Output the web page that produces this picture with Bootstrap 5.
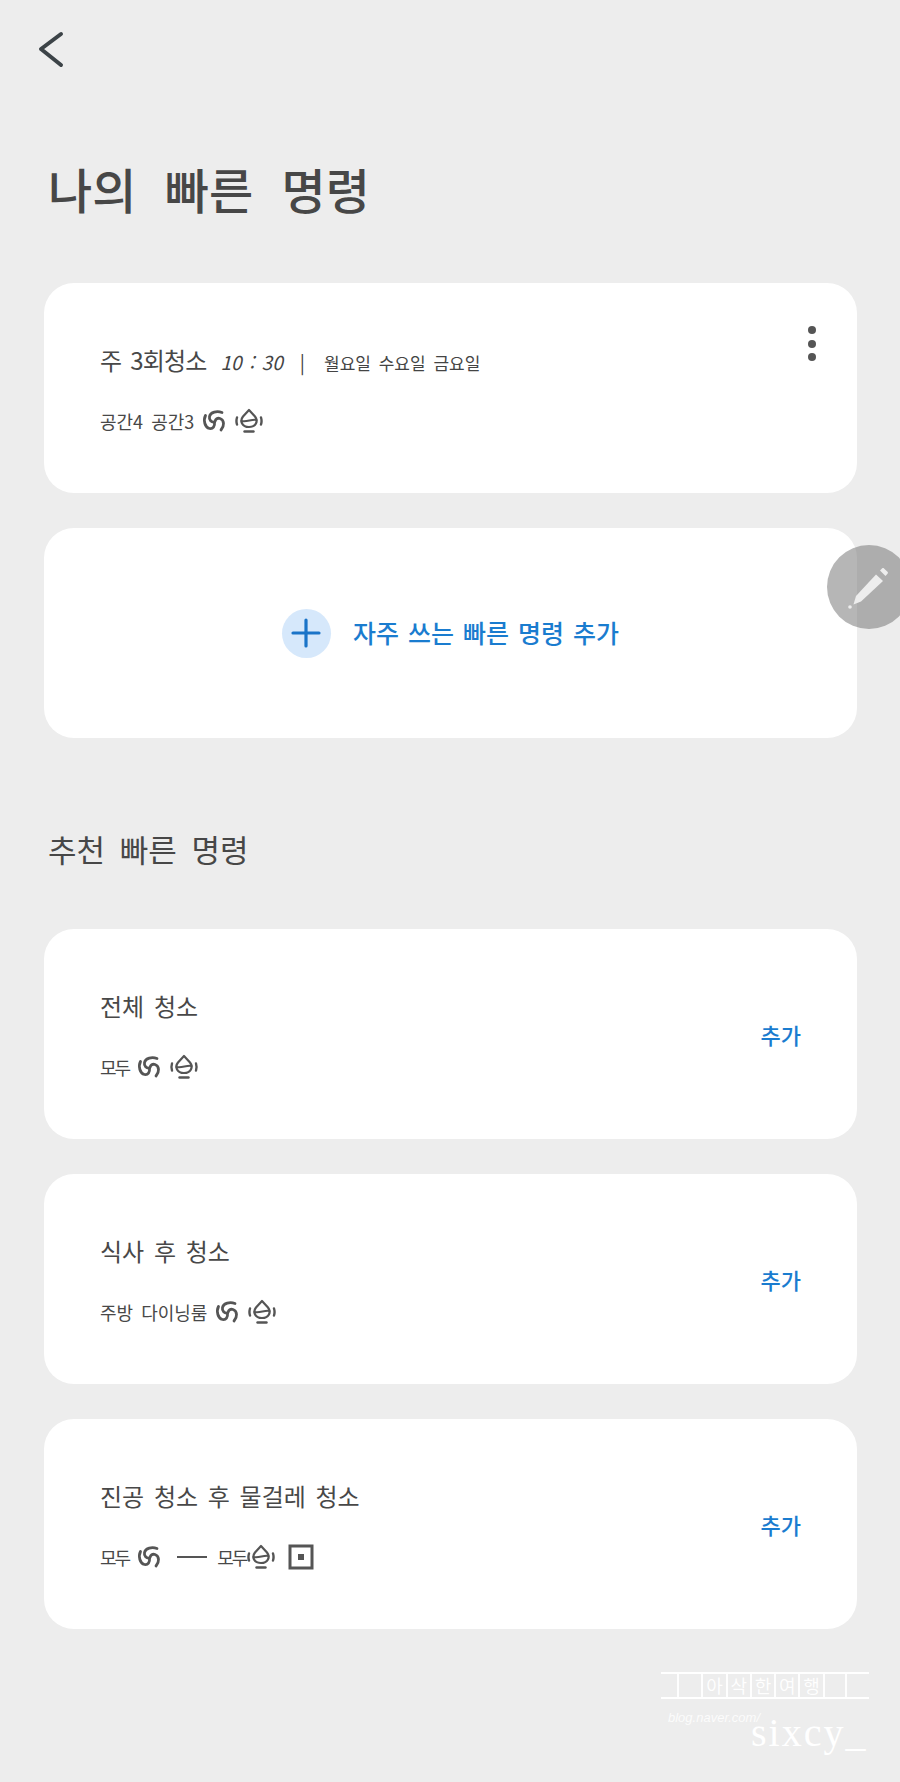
<!DOCTYPE html>
<html lang="ko">
<head>
    <meta charset="UTF-8">
    <title>나의 빠른 명령</title>
    <link href="https://cdn.jsdelivr.net/npm/bootstrap@5.3.0/dist/css/bootstrap.min.css" rel="stylesheet">
    <style>
        body {
            position: relative;
            height: 1782px;
            overflow: hidden;
            background: #ededed;
            color: #444;
            font-family: "Noto Sans CJK KR", "Noto Sans", sans-serif;
        }
        .screen { padding: 0 43px 0 44px; }
        .back-btn { display: block; padding-top: 30px; height: 68px; margin-left: -6px; line-height: 0; }
        .page-title { margin: 87px 0 0 4px; font-size: 48px; line-height: 66px; font-weight: 500; word-spacing: 15px; color: #474747; }
        .section-title { margin: 86px 0 0 4px; font-size: 31px; line-height: 50px; font-weight: 400; word-spacing: 6px; color: #474747; }
        .cmd-card { height: 210px; border: 0; border-radius: 30px; background: #fff; }
        .top-gap { margin-top: 35px; }
        .title-gap { margin-top: 62px; }
        .section-gap { margin-top: 55px; }
        .cmd-body { padding: 58px 56px 0; }
        .cmd-name { height: 38px; font-size: 24px; line-height: 38px; color: #484848; word-spacing: 3px; }
        .cmd-name.tight { letter-spacing: -.8px; }
        .cmd-time { font-size: 19px; font-style: italic; margin-left: 14px; color: #444; word-spacing: 2px; letter-spacing: 0; }
        .cmd-days { font-size: 17px; color: #444; letter-spacing: 0; }
        .cmd-sep { font-size: 19px; margin: 0 20px 0 17px; color: #444; }
        .cmd-sub { margin-top: 27px; height: 30px; font-size: 18px; line-height: 30px; color: #484848; word-spacing: 3px; }
        .sub-short { letter-spacing: -2px; }
        .add-link { font-size: 22px; font-weight: 500; color: #1a7ccf; margin-right: 56px; }
        .more-btn { position: absolute; top: 43px; right: 41px; }
        .more-btn i { display: block; width: 8px; height: 8px; margin-bottom: 5.500px; border-radius: 50%; background: #555; }
        .plus-circle { width: 49px; height: 49px; border-radius: 50%; background: #d6e8fb; }
        .add-label { margin-left: 22px; font-size: 25px; font-weight: 500; color: #1a7ccf; word-spacing: 2px; }
        .pen-fab {
            position: absolute; left: 827px; top: 545px; width: 84px; height: 84px;
            border-radius: 50%; background: rgba(110, 110, 110, .5);
        }
        .dash-line { display: inline-block; width: 30px; height: 1.500px; background: #555; margin: 0 10px 0 16px; }
        .sq-icon { margin-left: 12px; }
        .watermark { position: absolute; left: 661px; top: 1672px; width: 208px; color: #fff; }
        .wm-row { height: 27px; border-top: 2px solid #fff; border-bottom: 2px solid #fff; padding-left: 16px; }
        .wm-cell { width: 25.300px; height: 100%; border-left: 2px solid #fff; font-size: 18px; line-height: 22px; text-align: center; opacity: .95; }
        .wm-cell.wide { width: 23px; }
        .wm-url { position: absolute; left: 7px; top: 36px; font-family: "Liberation Sans", sans-serif; font-size: 13px; font-style: italic; font-weight: 300; opacity: .85; }
        .wm-name { position: absolute; left: 90px; top: 39px; font-family: "Liberation Serif", serif; font-size: 40px; line-height: 44px; letter-spacing: 2px; }
    </style>
</head>
<body>
    <svg width="0" height="0" class="position-absolute">
        <defs>
            <symbol id="ic-swirl" viewBox="0 0 24 24">
                <g fill="none" stroke="#555" stroke-width="2.800" stroke-linecap="round">
                    <path d="M20 3.500C15 1.500 8.500 3 7.500 7.500c-.7 3.500 2 6 5 5.500"/>
                    <path d="M3.500 6.500C1 11.500 3 18.500 7.500 19.500c3.500.7 5.500-2.500 5-6"/>
                    <path d="M19 21c3.500-4 3.500-10-1-11.500-2.500-.8-4.500 .5-5 3"/>
                </g>
            </symbol>
            <symbol id="ic-robot" viewBox="0 0 30 26">
                <g fill="none" stroke="#555" stroke-linecap="round" stroke-linejoin="round">
                    <path stroke-width="2.200" d="M15 2 21 8.500C24.500 13 22 19 15 19 8 19 5.500 13 9 8.500z"/>
                    <path stroke-width="2" d="M7.500 13c5 1.500 10-2 15-1"/>
                    <path stroke-width="2.400" d="M10.500 23.500h9"/>
                    <path stroke-width="2.400" d="M3 9.500c-.8 2.500-.8 4.500 0 7M27 9.500c.8 2.500.8 4.500 0 7"/>
                </g>
            </symbol>
        </defs>
    </svg>

    <div class="screen">
        <a class="back-btn" href="#" aria-label="뒤로">
            <svg width="26" height="38" viewBox="0 0 26 38">
                <path d="M23 4 3 19 23 35" fill="none" stroke="#3c4347" stroke-width="4" stroke-linecap="round" stroke-linejoin="round"/>
            </svg>
        </a>

        <h1 class="page-title">나의 빠른 명령</h1>

        <div class="card cmd-card title-gap">
            <div class="cmd-body">
                <div class="cmd-name tight">주 3회청소<span class="cmd-time">10 : 30</span><span class="cmd-sep">|</span><span class="cmd-days">월요일 수요일 금요일</span></div>
                <div class="cmd-sub d-flex align-items-center">공간4 공간3
                    <svg class="ms-2" width="24" height="24"><use href="#ic-swirl"/></svg>
                    <svg class="ms-2" width="30" height="26"><use href="#ic-robot"/></svg>
                </div>
            </div>
            <div class="more-btn"><i></i><i></i><i></i></div>
        </div>

        <div class="card cmd-card top-gap d-flex flex-row align-items-center justify-content-center">
            <div class="plus-circle d-flex align-items-center justify-content-center">
                <svg width="30" height="30" viewBox="0 0 30 30"><path d="M15 2v26M2 15h26" stroke="#1a74c8" stroke-width="3.200" stroke-linecap="round"/></svg>
            </div>
            <span class="add-label">자주 쓰는 빠른 명령 추가</span>
        </div>

        <h2 class="section-title">추천 빠른 명령</h2>

        <div class="card cmd-card section-gap d-flex flex-row align-items-center justify-content-between">
            <div class="cmd-body align-self-start">
                <div class="cmd-name">전체 청소</div>
                <div class="cmd-sub d-flex align-items-center"><span class="sub-short">모두</span>
                    <svg class="ms-2" width="24" height="24"><use href="#ic-swirl"/></svg>
                    <svg class="ms-2" width="30" height="26"><use href="#ic-robot"/></svg>
                </div>
            </div>
            <span class="add-link">추가</span>
        </div>

        <div class="card cmd-card top-gap d-flex flex-row align-items-center justify-content-between">
            <div class="cmd-body align-self-start">
                <div class="cmd-name">식사 후 청소</div>
                <div class="cmd-sub d-flex align-items-center">주방 다이닝룸
                    <svg class="ms-2" width="24" height="24"><use href="#ic-swirl"/></svg>
                    <svg class="ms-2" width="30" height="26"><use href="#ic-robot"/></svg>
                </div>
            </div>
            <span class="add-link">추가</span>
        </div>

        <div class="card cmd-card top-gap d-flex flex-row align-items-center justify-content-between">
            <div class="cmd-body align-self-start">
                <div class="cmd-name">진공 청소 후 물걸레 청소</div>
                <div class="cmd-sub d-flex align-items-center"><span class="sub-short">모두</span>
                    <svg class="ms-2" width="24" height="24"><use href="#ic-swirl"/></svg>
                    <span class="dash-line"></span><span class="sub-short">모두</span>
                    <svg width="30" height="26"><use href="#ic-robot"/></svg>
                    <svg class="sq-icon" width="26" height="26" viewBox="0 0 26 26"><rect x="2" y="2" width="22" height="22" fill="none" stroke="#555" stroke-width="3"/><rect x="10" y="10" width="6" height="6" fill="#555"/></svg>
                </div>
            </div>
            <span class="add-link">추가</span>
        </div>
    </div>

    <div class="pen-fab d-flex align-items-center justify-content-center">
        <svg width="48" height="48" viewBox="0 0 48 48">
            <path d="M31 11.500 38 18 16 38.500 8.500 41.500 11 33z" fill="#ededed"/>
            <path d="M35 7.500 37 5.500c.8-.6 1.500-.6 2 0l3.500 3.300c.6.600.6 1.300 0 2L40.500 13z" fill="#ededed"/>
            <circle cx="5" cy="44" r="1.800" fill="#ededed"/>
        </svg>
    </div>

    <div class="watermark">
        <div class="wm-row d-flex">
            <div class="wm-cell"></div><div class="wm-cell">아</div><div class="wm-cell">삭</div><div class="wm-cell">한</div><div class="wm-cell">여</div><div class="wm-cell">행</div><div class="wm-cell wide"></div><div class="wm-cell"></div>
        </div>
        <div class="wm-url">blog.naver.com/</div>
        <div class="wm-name">sixcy_</div>
    </div>
</body>
</html>
